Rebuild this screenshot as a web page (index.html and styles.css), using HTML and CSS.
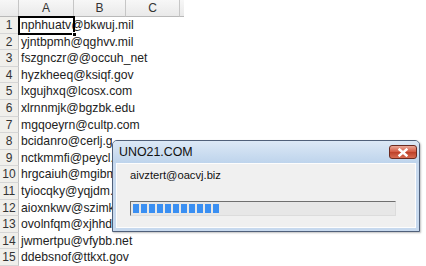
FILE: index.html
```
<!DOCTYPE html>
<html lang="en">
<head>
    <meta charset="UTF-8">
    <title>Sheet</title>
    <link rel="stylesheet" href="styles.css">
</head>
<body>
<div id="wrap">
    <div class="sheet">
        <div class="hd corner"></div>
        <div class="hd col">A</div>
        <div class="hd col">B</div>
        <div class="hd col">C</div>
        <div class="hd col stub"></div>

        <div class="num">1</div><div class="cell sel">nphhuatv@bkwuj.mil</div><div></div><div></div><div></div>
        <div class="num">2</div><div class="cell">yjntbpmh@qghvv.mil</div><div></div><div></div><div></div>
        <div class="num">3</div><div class="cell">fszgnczr@@occuh_net</div><div></div><div></div><div></div>
        <div class="num">4</div><div class="cell">hyzkheeq@ksiqf.gov</div><div></div><div></div><div></div>
        <div class="num">5</div><div class="cell">lxgujhxq@lcosx.com</div><div></div><div></div><div></div>
        <div class="num">6</div><div class="cell">xlrnnmjk@bgzbk.edu</div><div></div><div></div><div></div>
        <div class="num">7</div><div class="cell">mgqoeyrn@cultp.com</div><div></div><div></div><div></div>
        <div class="num">8</div><div class="cell under">bcidanro@cerlj.gov</div><div></div><div></div><div></div>
        <div class="num">9</div><div class="cell under">nctkmmfi@peycl.net</div><div></div><div></div><div></div>
        <div class="num">10</div><div class="cell under">hrgcaiuh@mgibm.com</div><div></div><div></div><div></div>
        <div class="num">11</div><div class="cell under">tyiocqky@yqjdm.net</div><div></div><div></div><div></div>
        <div class="num">12</div><div class="cell under">aioxnkwv@szimk.com</div><div></div><div></div><div></div>
        <div class="num">13</div><div class="cell under">ovolnfqm@xjhhd.org</div><div></div><div></div><div></div>
        <div class="num">14</div><div class="cell">jwmertpu@vfybb.net</div><div></div><div></div><div></div>
        <div class="num">15</div><div class="cell">ddebsnof@ttkxt.gov</div><div></div><div></div><div></div>
    </div>

    <div class="dlg">
        <div class="dlg_title">
            <span>UNO21.COM</span>
            <div class="btn_close">
                <svg width="14" height="9" viewBox="0 0 14 9">
                    <path d="M3.5 1.5 L10.5 7.5 M10.5 1.5 L3.5 7.5" stroke="#fff" stroke-width="2.4" stroke-linecap="square"/>
                </svg>
            </div>
        </div>
        <div class="dlg_body">
            <div class="dlg_text">aivztert@oacvj.biz</div>
            <div class="progress">
                <i></i><i></i><i></i><i></i><i></i><i></i><i></i><i></i><i></i><i></i><i></i>
            </div>
        </div>
    </div>
</div>
</body>
</html>
```

FILE: styles.css
```
body {
    margin: 0;
    background: #fff;
    font-family: "Liberation Sans", Arial, sans-serif;
}
#wrap {
    width: 426px;
    height: 266px;
    position: relative;
    overflow: hidden;
}

/* sheet */
.sheet {
    display: grid;
    grid-template-columns: 19px 55px 52px 54px 4px;
    grid-template-rows: 17px repeat(15, 16.6px);
}
.hd {
    background: linear-gradient(#f7f7f7, #e9e9e9);
    border-bottom: 1px solid #b9b9b9;
    border-right: 1px solid #c6c6c6;
    box-sizing: border-box;
    font-size: 12px;
    color: #333;
    text-align: center;
    line-height: 16px;
}
.stub {
    border-right: 0;
}
.num {
    background: #f0efeb;
    border-right: 1px solid #c2c2c2;
    border-bottom: 1px solid #d6d6d6;
    box-sizing: border-box;
    font-size: 12px;
    color: #333;
    text-align: center;
    line-height: 16px;
}
.cell {
    font-size: 12.2px;
    color: #222;
    white-space: nowrap;
    padding-left: 2px;
    line-height: 16px;
    position: relative;
}
/* rows the dialog sits on */
.under {
    width: 93px;
    overflow: hidden;
    box-sizing: border-box;
}
.sel {
    outline: 2px solid #000;
    outline-offset: -1px;
    z-index: 1;
}
.sel::after {
    content: "";
    position: absolute;
    right: -3px;
    bottom: -3px;
    width: 5px;
    height: 5px;
    background: #000;
    border: 1px solid #fff;
    box-sizing: border-box;
}

/* dialog */
.dlg {
    position: absolute;
    left: 112px;
    top: 140px;
    width: 308px;
    height: 92px;
    box-sizing: border-box;
    border: 1px solid #50607a;
    border-radius: 5px 5px 0 0;
    background: #c7d9ee;
    padding: 0 3px 3px;
    display: flex;
    flex-direction: column;
    box-shadow: 1px 1px 2px rgba(0,0,0,0.25);
    z-index: 5;
}
.dlg_title {
    height: 22px;
    display: flex;
    align-items: center;
    justify-content: space-between;
    background: linear-gradient(#dce8f6, #bed4ec);
    margin: 0 -3px;
    padding: 0 2px 0 6px;
    border-radius: 4px 4px 0 0;
    font-size: 12.4px;
    color: #111;
}
.btn_close {
    width: 28px;
    height: 14px;
    box-sizing: border-box;
    border: 1px solid #6b2a20;
    border-radius: 3px;
    background: linear-gradient(#eaa99a, #d4573f 50%, #bd3f28 51%, #d86c52);
    display: flex;
    align-items: center;
    justify-content: center;
}
.dlg_body {
    flex: 1;
    background: #f0f0f0;
    border: 1px solid #fdfdfd;
    padding: 4px 0 0 13px;
}
.dlg_text {
    font-size: 11.2px;
    color: #111;
    line-height: 14px;
}
.progress {
    margin-top: 19px;
    width: 266px;
    height: 15px;
    box-sizing: border-box;
    border: 1px solid;
    border-color: #6f6f6f #dcdcdc #dcdcdc #6f6f6f;
    background: #e7e7e7;
    display: flex;
    gap: 2px;
    padding: 2px 0 0 2px;
}
.progress i {
    display: block;
    width: 6px;
    height: 9px;
    background: #3a8ff2;
}
```
